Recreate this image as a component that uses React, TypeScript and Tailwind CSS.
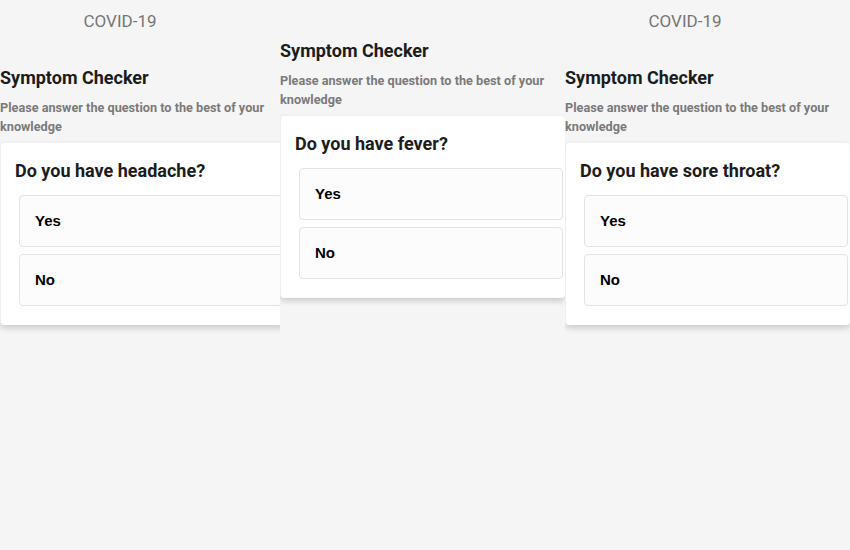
function Choice({ label }: { label: string }) {
  return (
    <button
      type="button"
      className="ml-[18px] mr-[2px] flex h-[52px] items-center rounded-[4px] border border-[#e3e3e3] bg-[#fcfcfc] pl-[15px] text-left font-['Liberation_Sans',Arial,sans-serif] text-[15px] font-bold text-black"
    >
      {label}
    </button>
  );
}

function Screen({
  question,
  scrolled = false,
  className = "",
}: {
  question: string;
  scrolled?: boolean;
  className?: string;
}) {
  return (
    <div className={`h-full shrink-0 overflow-hidden font-[Roboto,'Liberation_Sans',sans-serif] ${className}`}>
      {scrolled ? (
        <div className="h-[38px]" />
      ) : (
        <div className="flex h-[65px] w-[240px] items-start justify-center pt-[9px] text-[17px] text-[#757575]">
          COVID-19
        </div>
      )}
      <h1 className="text-[18px] leading-[26px] font-bold text-[#1c1c1c]">Symptom Checker</h1>
      <p className="mt-[7px] w-[280px] text-[12.7px] leading-[19px] font-bold text-[#7a7a7a]">
        Please answer the question to the best of your knowledge
      </p>
      <div className="mt-[7px] w-[285px] rounded-[4px] border-l border-[#eeeeee] bg-white pt-[16px] pb-[19px] shadow-[0_3px_6px_rgba(0,0,0,0.18)]">
        <h2 className="pl-[14px] text-[18px] leading-[24px] font-bold text-[#1c1c1c]">{question}</h2>
        <div className="mt-[12px] flex flex-col gap-[7px]">
          <Choice label="Yes" />
          <Choice label="No" />
        </div>
      </div>
    </div>
  );
}

export default function App() {
  return (
    <div className="flex h-[550px] w-[850px] overflow-hidden bg-[#f5f5f5]">
      <Screen className="w-[280px]" question="Do you have headache?" />
      <Screen className="w-[285px]" question="Do you have fever?" scrolled />
      <Screen className="w-[285px]" question="Do you have sore throat?" />
    </div>
  );
}
